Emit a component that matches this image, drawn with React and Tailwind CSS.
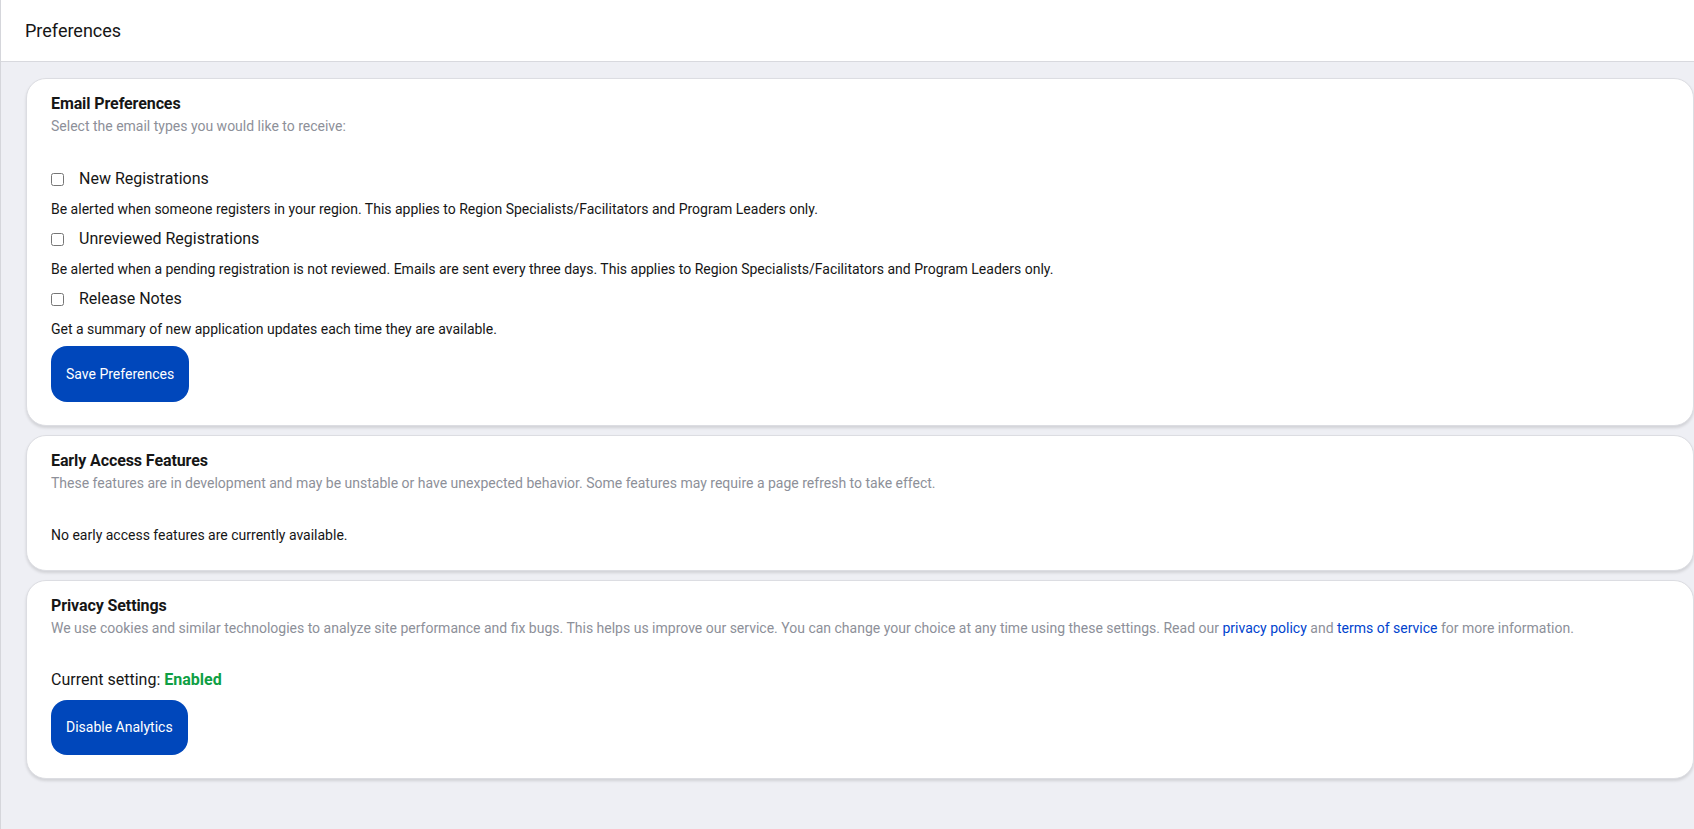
import React, { useState } from 'react';

const FONT = "font-['Roboto','Noto_Sans',sans-serif]";

const emailTypes = [
  {
    id: 'new',
    label: 'New Registrations',
    description:
      'Be alerted when someone registers in your region. This applies to Region Specialists/Facilitators and Program Leaders only.',
  },
  {
    id: 'unreviewed',
    label: 'Unreviewed Registrations',
    description:
      'Be alerted when a pending registration is not reviewed. Emails are sent every three days. This applies to Region Specialists/Facilitators and Program Leaders only.',
  },
  {
    id: 'release',
    label: 'Release Notes',
    description: 'Get a summary of new application updates each time they are available.',
  },
];

function Card({ title, subtitle, children, className = '' }) {
  return (
    <section
      className={`ml-[25px] bg-white border border-[#dcdde2] rounded-[20px] shadow-[0_2px_3px_rgba(0,0,0,0.12)] px-6 pt-[13px] ${className}`}
    >
      <h2 className="text-[16px] leading-6 font-bold text-[#161616] tracking-[-0.1px]">{title}</h2>
      <p className="text-[14px] leading-5 text-[#8d9099]">{subtitle}</p>
      {children}
    </section>
  );
}

export default function App() {
  const [checked, setChecked] = useState({});
  const [analytics, setAnalytics] = useState(true);

  return (
    <div className={`${FONT} min-h-screen bg-[#eeeff4] border-l border-[#d5d6db] text-[#161616]`}>
      <header className="h-[62px] bg-white border-b border-[#d8d9de] flex items-center px-6">
        <h1 className="text-[18px] font-normal text-[#161616]">Preferences</h1>
      </header>

      <main className="pt-[16px] flex flex-col gap-[9px]">
        <Card title="Email Preferences" subtitle="Select the email types you would like to receive:" className="pb-[23px]">
          <div className="mt-[31px] flex flex-col">
            {emailTypes.map((item) => (
              <div key={item.id} className="h-[60px]">
                <label className="flex items-center h-6 cursor-pointer">
                  <input
                    type="checkbox"
                    checked={!!checked[item.id]}
                    onChange={() => setChecked((c) => ({ ...c, [item.id]: !c[item.id] }))}
                    className="w-[13px] h-[13px] m-0"
                  />
                  <span className="ml-[15px] text-[16px] text-[#161616]">{item.label}</span>
                </label>
                <p className="mt-[8px] text-[14px] leading-5 text-[#161616]">{item.description}</p>
              </div>
            ))}
          </div>
          <button
            type="button"
            className="mt-[-1px] h-[56px] px-[15px] rounded-[16px] bg-[#0047bb] text-white text-[14px]"
          >
            Save Preferences
          </button>
        </Card>

        <Card
          title="Early Access Features"
          subtitle="These features are in development and may be unstable or have unexpected behavior. Some features may require a page refresh to take effect."
          className="pb-[25px]"
        >
          <p className="mt-[32px] text-[14px] leading-5 text-[#161616]">No early access features are currently available.</p>
        </Card>

        <Card
          title="Privacy Settings"
          className="pb-[23px]"
          subtitle={
            <>
              We use cookies and similar technologies to analyze site performance and fix bugs. This helps us improve our
              service. You can change your choice at any time using these settings. Read our{' '}
              <a href="#" className="text-[#0043ce]">privacy policy</a> and{' '}
              <a href="#" className="text-[#0043ce]">terms of service</a> for more information.
            </>
          }
        >
          <p className="mt-[30px] text-[16px] leading-6">
            Current setting:{' '}
            <span className={analytics ? 'font-bold text-[#0e9f44]' : 'font-bold text-[#da1e28]'}>
              {analytics ? 'Enabled' : 'Disabled'}
            </span>
          </p>
          <button
            type="button"
            onClick={() => setAnalytics((v) => !v)}
            className="mt-[8px] h-[55px] px-[15px] rounded-[16px] bg-[#0047bb] text-white text-[14px]"
          >
            {analytics ? 'Disable Analytics' : 'Enable Analytics'}
          </button>
        </Card>
      </main>
    </div>
  );
}
